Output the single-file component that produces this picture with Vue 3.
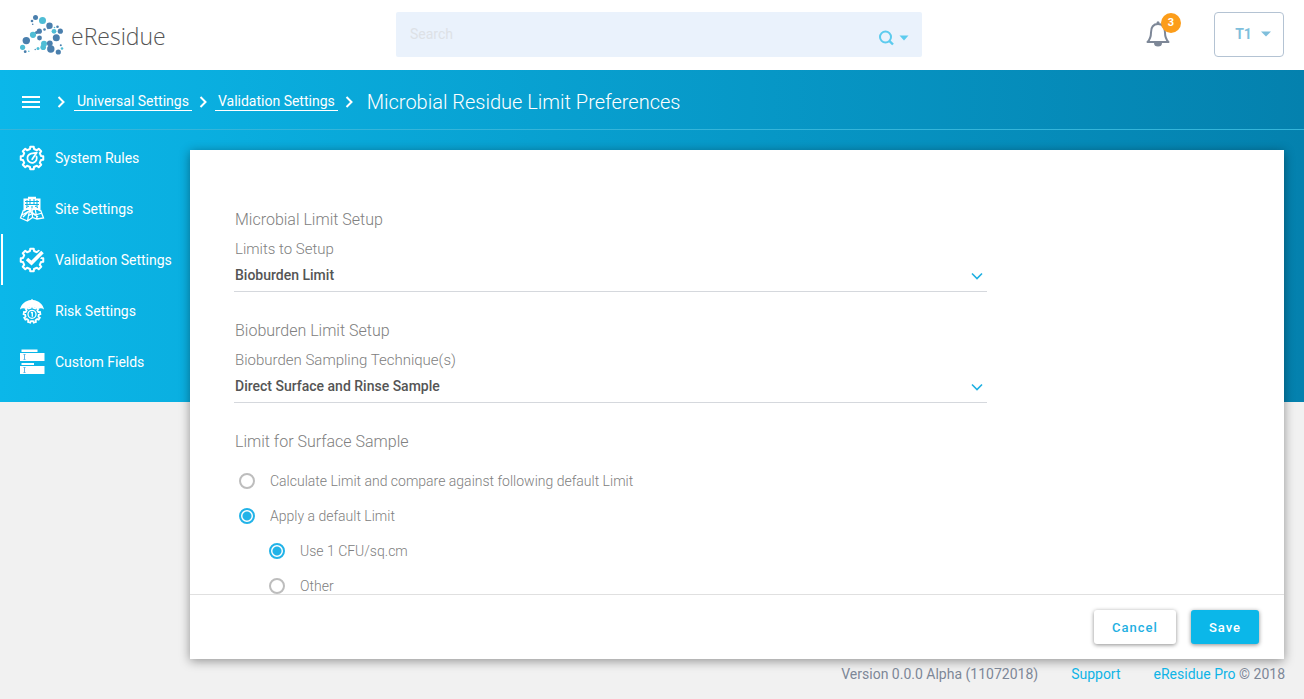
<script setup>
import { ref } from 'vue'

const setup = ref('Bioburden Limit')
const technique = ref('Direct Surface and Rinse Sample')
const mode = ref('default')
const amount = ref('one')
const query = ref('')

function gear(cx, cy, outer, inner, teeth) {
  const pts = []
  const step = (Math.PI * 2) / teeth
  const at = (a, r) => `${(cx + Math.sin(a) * r).toFixed(2)} ${(cy - Math.cos(a) * r).toFixed(2)}`
  for (let i = 0; i < teeth; i++) {
    const a = i * step
    pts.push(at(a - step * 0.28, inner), at(a - step * 0.2, outer), at(a + step * 0.2, outer), at(a + step * 0.28, inner))
  }
  return `M${pts.join('L')}Z`
}
const bigGear = gear(13, 13, 11.4, 9.2, 8)
const smallGear = gear(13, 16.5, 8.4, 6.8, 9)

const dots = [
  [35.5, 17.5, 2.5, 0], [42.5, 20.5, 3.5, 1], [32, 21, 1.3, 0], [32.7, 24.3, 0.8, 0],
  [49.5, 25.7, 3.2, 0], [57.5, 26.7, 1.3, 0], [54.5, 27.5, 0.8, 1], [44.5, 29.5, 1.3, 0], [48, 28.5, 0.8, 0],
  [54, 31.3, 2.4, 1], [60.3, 31.2, 2.6, 0], [39.3, 31.2, 2.6, 0], [36.5, 32.5, 1.6, 0], [33, 34.8, 3.1, 1],
  [39.5, 38, 2.4, 0], [56.3, 37.8, 3.5, 0], [26.3, 40.6, 3.7, 0], [22.6, 47.3, 2.6, 1],
  [25.2, 51.7, 1.4, 0], [28.8, 51.2, 0.8, 1], [35.2, 49.5, 0.7, 0], [38, 48.5, 1.5, 1],
  [44, 43.7, 3, 1], [43.2, 47.2, 2.8, 1], [49.8, 43.3, 2.9, 0], [50.8, 49, 3.7, 0],
  [58.3, 52, 2.6, 0], [60.8, 45.3, 1, 0], [62, 48.5, 1.3, 1]
]
</script>

<template>
  <div class="page">
    <header class="top">
      <a class="brand" href="#" aria-label="eResidue home">
        <svg width="45" height="42" viewBox="19 13 45 42" aria-hidden="true">
          <circle v-for="(d, i) in dots" :key="i" :cx="d[0]" :cy="d[1]" :r="d[2]" :fill="d[3] ? '#4fbdd5' : '#4a7fad'" />
        </svg>
        <span>eResidue</span>
      </a>
      <form class="search" role="search" @submit.prevent>
        <input v-model="query" type="text" placeholder="Search" aria-label="Search" />
        <button type="submit" aria-label="Run search">
          <svg width="16" height="16" viewBox="0 0 16 16" fill="none" stroke="#5ccbee" stroke-width="2"><circle cx="7.5" cy="7" r="5.5" /><path d="M11.3 10.8L15 14.5" stroke-width="2.4" /></svg>
        </button>
        <button type="button" aria-label="Search options">
          <svg width="10" height="6" viewBox="0 0 10 6"><path d="M0.5 0.5H9.5L5 5.5Z" fill="#5ccbee" /></svg>
        </button>
      </form>
      <div class="account">
        <button class="bell" type="button" aria-label="Notifications">
          <svg width="24" height="26" viewBox="0 0 24 26"><path d="M1.5 21C4.5 18 5 16 5 11.5C5 6 7.5 3 12 3C16.5 3 19 6 19 11.5C19 16 19.5 18 22.5 21Z" fill="none" stroke="#7d8797" stroke-width="2" stroke-linejoin="round" /><circle cx="12" cy="1.8" r="1.5" fill="#7d8797" /><path d="M8 22H16A4 3.6 0 0 1 8 22Z" fill="#7d8797" /></svg>
          <span class="badge">3</span>
        </button>
        <button class="user" type="button">T1
          <svg width="10" height="6" viewBox="0 0 10 6" aria-hidden="true"><path d="M0 0.5H10L5 5.5Z" fill="#7fbfdc" /></svg>
        </button>
      </div>
    </header>

    <div class="stage">
      <nav class="crumbs" aria-label="Breadcrumb">
        <button class="menu" type="button" aria-label="Menu">
          <svg width="18" height="12" viewBox="0 0 18 12"><path d="M0 1H18M0 6H18M0 11H18" stroke="#fff" stroke-width="2" /></svg>
        </button>
        <svg class="sep" width="8" height="12" viewBox="0 0 8 12" aria-hidden="true"><path d="M1.5 1L6.5 6L1.5 11" /></svg>
        <a href="#">Universal Settings</a>
        <svg class="sep" width="8" height="12" viewBox="0 0 8 12" aria-hidden="true"><path d="M1.5 1L6.5 6L1.5 11" /></svg>
        <a href="#">Validation Settings</a>
        <svg class="sep" width="8" height="12" viewBox="0 0 8 12" aria-hidden="true"><path d="M1.5 1L6.5 6L1.5 11" /></svg>
        <h1>Microbial Residue Limit Preferences</h1>
      </nav>

      <div class="columns">
        <nav class="side" aria-label="Settings">
          <a href="#">
            <svg width="26" height="26" viewBox="0 0 26 26" fill="none" stroke="#fff" stroke-width="2" stroke-linejoin="round">
              <path :d="bigGear" />
              <path d="M17.5 11.5A4.7 4.7 0 1 1 12 8.6L17.8 7.6L13.2 14.2" stroke-width="1.8" stroke-linecap="round" />
            </svg>
            System Rules
          </a>
          <a href="#">
            <svg width="26" height="26" viewBox="0 0 26 26" fill="none" stroke="#fff">
              <path d="M4.5 2.5H9V0.8H17V2.5H21.5V14H4.5Z" fill="#fff" stroke="none" />
              <path d="M6 5.5H20M6 8.5H20M8 4V11M11 3V9M15 3V9M18 4V11M7 12L10 10M19 12L16 10M13 10V14" stroke="#0bb3e4" />
              <path d="M4.5 14L1.5 22L8.5 25L13.5 21.5L18 23L24.500 22L21.500 14M8.500 25L11 12M13.500 21.500L13 12M18 23L16 12M3 19L10 15L16 19L23 17M5 15L9 12L12 15L17 12L21 15M9 20L14 17L19 21M4 21L9 16" stroke-width="1.3" />
            </svg>
            Site Settings
          </a>
          <a href="#" class="active" aria-current="page">
            <svg width="26" height="26" viewBox="0 0 26 26" fill="none" stroke="#fff" stroke-width="2" stroke-linejoin="round">
              <path :d="bigGear" />
              <path d="M8 12L12 16.5L23.5 5" stroke="#0bb3e4" stroke-width="6" />
              <path d="M8 12L12.5 16L23.500 5" stroke-width="3.6" stroke-linejoin="miter" />
            </svg>
            Validation Settings
          </a>
          <a href="#">
            <svg width="26" height="26" viewBox="0 0 26 26" fill="none" stroke="#fff">
              <path :d="smallGear" stroke-width="1.8" />
              <path d="M1 11.5C2 6 6.500 2.500 12 2L13 0.8L14 2C19.500 2.500 24 6 25 11.500Q22.500 9.500 20.500 10.500Q17 9 13 9.500Q9 9 5.500 10.500Q3.500 9.500 1 11.500Z" fill="#fff" stroke="none" />
              <circle cx="13" cy="16.3" r="4" stroke-width="1.3" />
              <path d="M13.3 14V18.800M12 15L13.300 14" stroke-width="1.3" />
            </svg>
            Risk Settings
          </a>
          <a href="#">
            <svg width="26" height="26" viewBox="0 0 26 26">
              <path d="M2.5 0.500H18.500V3H2.500ZM1 4H25.500V12H1ZM2.500 14H15V16H2.500ZM1 17H25.500V25H1Z" fill="#fff" />
              <path d="M4.500 5.500H6.500M5.500 5.500V10.500M4.500 10.500H6.500M4.500 18.500H6.500M5.500 18.500V23.500M4.500 23.500H6.500" stroke="#62b5e5" fill="none" />
            </svg>
            Custom Fields
          </a>
        </nav>

        <main class="card">
          <form id="limits" class="body" @submit.prevent>
            <section>
              <h2>Microbial Limit Setup</h2>
              <label for="setup">Limits to Setup</label>
              <div class="pick">
                <select id="setup" v-model="setup">
                  <option>Bioburden Limit</option>
                </select>
                <svg width="12" height="8" viewBox="0 0 12 8" aria-hidden="true"><path d="M1 1.5L6 6.5L11 1.5" /></svg>
              </div>
            </section>
            <section>
              <h2>Bioburden Limit Setup</h2>
              <label for="technique">Bioburden Sampling Technique(s)</label>
              <div class="pick">
                <select id="technique" v-model="technique">
                  <option>Direct Surface and Rinse Sample</option>
                </select>
                <svg width="12" height="8" viewBox="0 0 12 8" aria-hidden="true"><path d="M1 1.5L6 6.5L11 1.5" /></svg>
              </div>
            </section>
            <section>
              <h2>Limit for Surface Sample</h2>
              <div class="radios">
                <label><input v-model="mode" type="radio" name="mode" value="calc" />Calculate Limit and compare against following default Limit</label>
                <label><input v-model="mode" type="radio" name="mode" value="default" />Apply a default Limit</label>
                <label class="sub"><input v-model="amount" type="radio" name="amount" value="one" />Use 1 CFU/sq.cm</label>
                <label class="sub"><input v-model="amount" type="radio" name="amount" value="other" />Other</label>
              </div>
            </section>
          </form>
          <div class="actions">
            <button type="button">Cancel</button>
            <button class="primary" type="submit" form="limits">Save</button>
          </div>
        </main>
      </div>
      <footer class="foot">
        <span>Version 0.0.0 Alpha (11072018)</span>
        <a href="#">Support</a>
        <span><a href="#">eResidue Pro</a> © 2018</span>
      </footer>
    </div>
  </div>
</template>

<style>
body { margin: 0; }
</style>

<style scoped>
* { box-sizing: border-box; }
.page {
  height: 100vh;
  min-height: 480px;
  display: flex;
  flex-direction: column;
  overflow: hidden;
  font-family: Roboto, "Liberation Sans", sans-serif;
  font-size: 14px;
  color: #808080;
  background: #f1f1f1;
}
button { font: inherit; padding: 0; border: 0; background: none; cursor: pointer; }
a { text-decoration: none; }
svg { display: block; flex: none; }

.top {
  flex: none;
  height: 70px;
  display: grid;
  grid-template-columns: 396fr 526fr 382fr;
  align-items: center;
  padding-bottom: 2px;
  background: #fff;
}
.brand {
  display: flex;
  align-items: center;
  gap: 7px;
  padding-left: 19px;
  font: 300 23px/32px "Open Sans", "Noto Sans", sans-serif;
  color: #555;
}
.brand span { padding-top: 4px; }
.search {
  display: flex;
  align-items: center;
  gap: 5px;
  height: 45px;
  padding: 0 13px 0 14px;
  background: #eaf2fc;
  border-radius: 2px;
}
.search input {
  flex: 1;
  min-width: 0;
  padding: 0;
  border: 0;
  outline: 0;
  background: none;
  font: 400 14px/20px Roboto, sans-serif;
  color: #555;
}
.search input::placeholder { color: #dde1e6; opacity: 1; }
.search button { padding-top: 7px; }
.account {
  display: flex;
  align-items: center;
  justify-content: flex-end;
  gap: 44px;
  padding-right: 20px;
}
.bell { position: relative; }
.badge {
  position: absolute;
  top: -8px;
  right: -11px;
  width: 20px;
  border-radius: 50%;
  background: #fc9d1a;
  color: #fff;
  font-weight: 700;
  font-size: 11px;
  line-height: 20px;
}
.user {
  width: 70px;
  height: 45px;
  display: flex;
  align-items: center;
  justify-content: center;
  gap: 9px;
  padding-left: 8px;
  border: 1px solid #b4c3d3;
  border-radius: 4px;
  color: #7fbfdc;
  font-weight: 700;
}

.stage {
  flex: 1;
  min-height: 0;
  display: flex;
  flex-direction: column;
  background: linear-gradient(to right, #0bb7e9, #0481ae) 0 0 / 100% 332px no-repeat;
}
.crumbs {
  flex: none;
  height: 60px;
  display: flex;
  align-items: center;
  padding: 4px 22px 0;
  border-bottom: 1px solid #35b5da;
  color: #fff;
}
.sep { fill: none; stroke: #fff; stroke-width: 2; margin: 0 8px 0 7px; }
.menu + .sep { margin: 0 9px 0 17px; }
.crumbs a {
  padding: 0 3px;
  border-bottom: 1px solid #fff;
  color: #fff;
  line-height: 18px;
}
.crumbs h1 { margin: 0 0 0 6px; font-size: 20px; line-height: 24px; font-weight: 300; }

.columns { flex: 1; min-height: 0; display: flex; }
.side { flex: none; width: 190px; padding-top: 2px; }
.side a {
  display: flex;
  align-items: center;
  gap: 10px;
  height: 51px;
  padding-left: 19px;
  color: #fff;
}
.side .active { box-shadow: inset 1px 0 #0bb7e9, inset 3px 0 #fff; }

.card {
  flex: 1;
  min-width: 0;
  display: flex;
  flex-direction: column;
  margin: 20px 20px 0 0;
  background: #fff;
  box-shadow: 0 2px 10px rgba(0, 0, 0, 0.4);
}
.body {
  flex: 1;
  min-height: 0;
  overflow-y: auto;
  scrollbar-width: none;
  padding: 57px 46px 0 44px;
}
section { margin-bottom: 26px; }
h2 { margin: 0; padding: 0 1px; font-size: 16px; line-height: 26px; font-weight: 300; }
section > label { display: block; padding: 3px 1px 0; font-size: 15px; line-height: 26px; font-weight: 300; }
.pick { position: relative; width: 75%; border-bottom: 1px solid #d5d8dd; }
.pick select {
  appearance: none;
  display: block;
  width: 100%;
  height: 29px;
  padding: 0 30px 4px 1px;
  border: 0;
  outline: 0;
  background: none;
  color: #555;
  font: 500 14px/20px Roboto, sans-serif;
}
.pick svg {
  position: absolute;
  right: 4px;
  top: 10px;
  fill: none;
  stroke: #1fb0e2;
  stroke-width: 1.6;
  pointer-events: none;
}
.radios { padding: 8px 0 20px 5px; }
.radios label {
  display: flex;
  align-items: center;
  gap: 15px;
  height: 35px;
  font-weight: 300;
}
.radios .sub { margin-left: 30px; }
.radios input {
  appearance: none;
  flex: none;
  width: 16px;
  height: 16px;
  margin: 0;
  border: 2px solid #bdbdbd;
  border-radius: 50%;
}
.radios input:checked {
  border-color: #22b3e8;
  background: radial-gradient(circle, #22b3e8 4px, #fff 5px);
}
.actions {
  flex: none;
  display: flex;
  justify-content: flex-end;
  gap: 15px;
  padding: 15px 25px;
  border-top: 1px solid #e0e0e0;
}
.actions button {
  height: 34px;
  padding: 0 18px;
  border-radius: 3px;
  background: #fff;
  color: #1fb0e2;
  font-size: 13px;
  font-weight: 500;
  letter-spacing: 1px;
  box-shadow: 0 1px 4px rgba(0, 0, 0, 0.45);
}
.actions .primary { background: #0bb7e9; color: #fff; }

.foot {
  flex: none;
  display: flex;
  justify-content: flex-end;
  gap: 33px;
  height: 40px;
  padding: 5px 19px 0 0;
  line-height: 20px;
  color: #7d8797;
}
.foot a { color: #0fb4e6; }
</style>
